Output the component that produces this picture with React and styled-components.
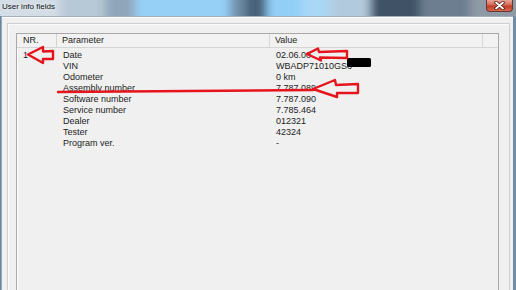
import React from 'react';
import styled, { createGlobalStyle } from 'styled-components';

const GlobalStyle = createGlobalStyle`
  html, body {
    margin: 0;
    padding: 0;
    background: #f0f0f0;
  }
  body {
    font-family: "Liberation Sans", Arial, sans-serif;
  }
`;

const columns = '40px 213px 213px 1fr';

const rows = [
  { nr: '1', name: 'Date', value: '02.06.00' },
  { name: 'VIN', value: 'WBADP71010GS6' },
  { name: 'Odometer', value: '0 km' },
  { name: 'Assembly number', value: '7.787.089' },
  { name: 'Software number', value: '7.787.090' },
  { name: 'Service number', value: '7.785.464' },
  { name: 'Dealer', value: '012321' },
  { name: 'Tester', value: '42324' },
  { name: 'Program ver.', value: '-' },
];

// blurred desktop seen through the glass title bar
const blobs = [
  { x: -20, w: 80, c: '#d3dde6' },
  { x: 60, w: 45, c: '#b7c8d6' },
  { x: 105, w: 30, c: '#8fa6ba' },
  { x: 135, w: 95, c: '#96d0f6' },
  { x: 230, w: 15, c: '#6f8ea8' },
  { x: 245, w: 22, c: '#48627a' },
  { x: 267, w: 35, c: '#92cff7' },
  { x: 302, w: 28, c: '#a9d8f6' },
  { x: 330, w: 40, c: '#b2cade' },
  { x: 370, w: 50, c: '#3f5366' },
  { x: 420, w: 50, c: '#6c7e90' },
  { x: 470, w: 70, c: '#8e9aa6' },
];

const GlassBackdrop = () => (
  <Backdrop width="516" height="16" viewBox="0 0 516 16" preserveAspectRatio="none">
    <defs>
      <filter id="blur" x="-10%" y="-100%" width="120%" height="300%">
        <feGaussianBlur stdDeviation="5 1.5" />
      </filter>
    </defs>
    <rect width="516" height="16" fill="#8fbfe2" />
    <g filter="url(#blur)">
      {blobs.map((b) => (
        <rect key={b.x} x={b.x} y="-6" width={b.w} height="28" fill={b.c} />
      ))}
    </g>
  </Backdrop>
);

const App = () => (
  <>
    <GlobalStyle />
    <Window>
      <TitleBar>
        <GlassBackdrop />
        <Title>User info fields</Title>
        <CloseButton>
          <svg width="13" height="9" viewBox="0 0 13 9">
            <path d="M3 1.5 L10 7.5 M10 1.5 L3 7.5" stroke="#4a1a14" strokeWidth="3.4" strokeLinecap="round" />
            <path d="M3 1.5 L10 7.5 M10 1.5 L3 7.5" stroke="#fff" strokeWidth="1.8" strokeLinecap="round" />
          </svg>
        </CloseButton>
      </TitleBar>
      <Frame>
        <Client>
          <Panel>
            <ListView>
              <Header>
                <HeaderCell>NR.</HeaderCell>
                <HeaderCell>Parameter</HeaderCell>
                <HeaderCell>Value</HeaderCell>
                <HeaderCell />
              </Header>
              <Body>
                {rows.map((r) => (
                  <Row key={r.name}>
                    <Cell>{r.nr || ''}</Cell>
                    <Cell>{r.name}</Cell>
                    <Cell>{r.value}</Cell>
                  </Row>
                ))}
              </Body>
            </ListView>
          </Panel>
        </Client>
      </Frame>
      <Marks width="516" height="290" viewBox="0 0 516 290">
        <rect x="347" y="58" width="24" height="9" rx="1.5" fill="#000" />
        <g fill="none" stroke="#e6141c" strokeWidth="2.4" strokeLinejoin="round" strokeLinecap="round">
          <path d="M53 51 L43 51.5 L43 47 L28 54.5 L43 63 L43 59 L53 59 Z" />
          <path d="M347 51 L319 52 L318 48.5 L307 54 L321 60.5 L320 57.5 L347 58 Z" />
          <path d="M358 84 L336 85 L335 80 L313 89 L337 97 L337 93 L358 93 Z" />
          <path d="M58 92 L313 90" />
        </g>
      </Marks>
    </Window>
  </>
);

const Window = styled.div`
  position: relative;
  width: 516px;
  height: 290px;
  overflow: hidden;
  display: flex;
  flex-direction: column;
  background-color: #6f8ca8;
`;

const TitleBar = styled.div`
  position: relative;
  flex: none;
  height: 16px;
  display: flex;
  justify-content: space-between;
  align-items: flex-start;
  padding-left: 2px;
  background-color: #8fbfe2;
`;

const Backdrop = styled.svg`
  position: absolute;
  left: 0;
  top: 0;
  width: 100%;
  height: 100%;
`;

const Title = styled.span`
  position: relative;
  font-size: 8px;
  line-height: 14px;
  color: #111;
  text-shadow: 0 0 3px #e8eef4, 0 0 5px #e8eef4;
`;

const CloseButton = styled.div`
  position: relative;
  width: 27px;
  height: 12px;
  margin-right: 3px;
  box-sizing: border-box;
  display: flex;
  align-items: center;
  justify-content: center;
  border: 1px solid #6b3630;
  border-top: none;
  border-radius: 0 0 4px 4px;
  background: linear-gradient(180deg, #e8a597 0%, #d46a58 45%, #c13a26 55%, #d86a4e 100%);
`;

const Frame = styled.div`
  flex: 1;
  display: flex;
  padding: 0 3px 0 2px;
  background: linear-gradient(90deg, #5a7896 0, #9fb8cc 2px, #6f8ca8 100%);
`;

const Client = styled.div`
  flex: 1;
  display: flex;
  background: #f0f0f0;
  border-top: 1px solid #a6aeb6;
  box-shadow: inset 0 1px 0 #fff;
  padding: 6px 3px 0 5px;
`;

const Panel = styled.div`
  flex: 1;
  display: flex;
  border: 1px solid #cfcfcf;
  border-bottom: none;
  box-shadow: inset 1px 1px 0 #fbfbfb;
  padding: 9px 10px 0 8px;
`;

const ListView = styled.div`
  flex: 1;
  display: flex;
  flex-direction: column;
  border: 1px solid #a9a9a9;
  border-bottom: none;
  box-shadow: inset 1px 1px 0 #fff;
  background: #f0f0f0;
  color: #1c1c1c;
  font-size: 9px;
`;

const Header = styled.div`
  display: grid;
  grid-template-columns: ${columns};
  height: 13px;
  border-bottom: 1px solid #d5d5d5;
  background: #f2f2f2;
`;

const HeaderCell = styled.div`
  padding-left: 5px;
  line-height: 13px;
  border-right: 1px solid #d5d5d5;
  &:first-child {
    padding-left: 6px;
  }
  &:last-child {
    border-right: none;
  }
`;

const Body = styled.div`
  padding-top: 2px;
`;

const Row = styled.div`
  display: grid;
  grid-template-columns: ${columns};
  height: 11px;
  line-height: 11px;
`;

const Cell = styled.div`
  padding-left: 6px;
  white-space: nowrap;
`;

const Marks = styled.svg`
  position: absolute;
  left: 0;
  top: 0;
  pointer-events: none;
`;

export default App;
